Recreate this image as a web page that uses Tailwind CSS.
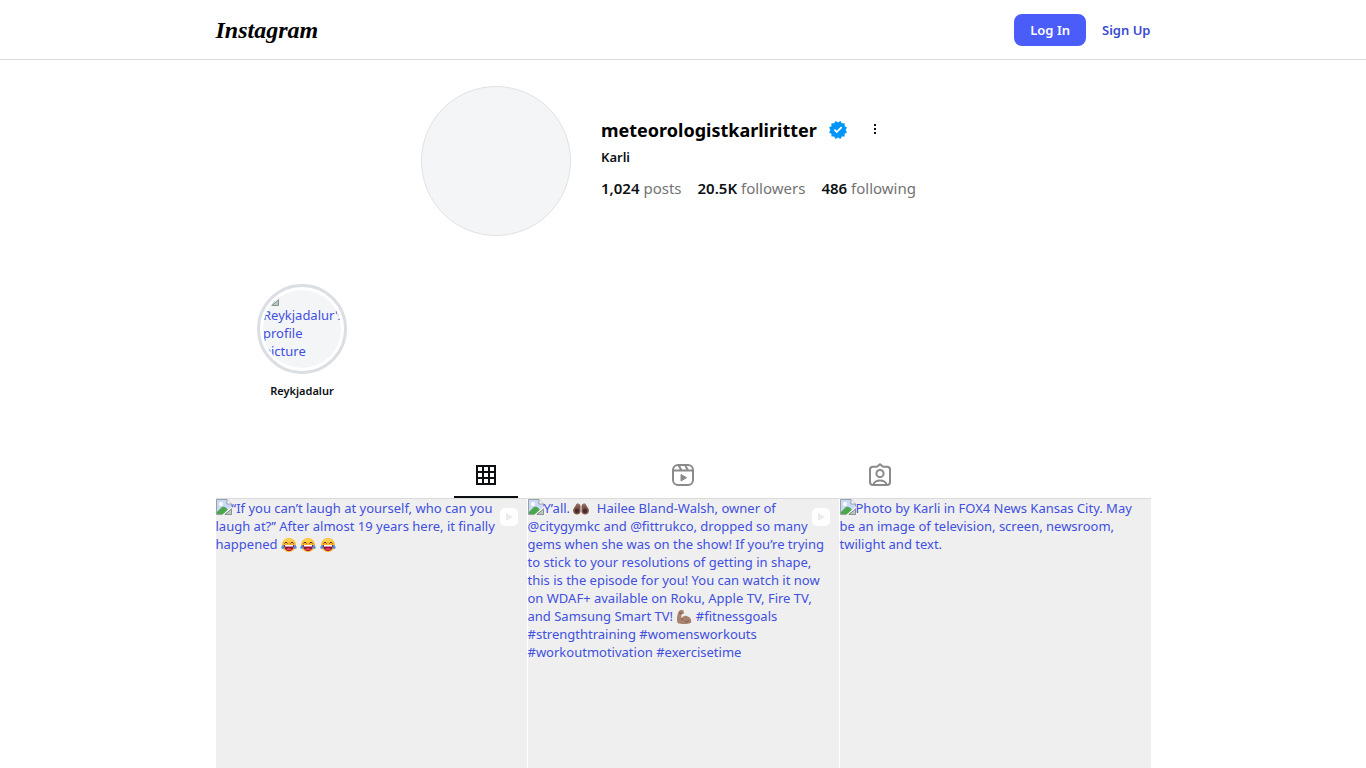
<!DOCTYPE html>
<html lang="en">
<head>
  <meta charset="UTF-8" />
  <meta name="viewport" content="width=device-width, initial-scale=1.0" />
  <title>Karli (@meteorologistkarliritter)</title>
  <script src="https://cdn.jsdelivr.net/npm/@tailwindcss/browser@4"></script>
</head>
<body class="flex h-screen flex-col overflow-hidden bg-white font-['Noto_Sans','Open_Sans',sans-serif] text-[13px] leading-[18px] text-[#0c1014]">

  <!-- shared shapes -->
  <svg class="hidden" aria-hidden="true">
    <symbol id="broken" viewBox="0 0 16 16">
      <path d="M.5 15.500V.5h10.500l4.500 4.500v10.500z" fill="#c9d9f5" stroke="#9aa0a6" />
      <path d="M11 .5V5h4.500" fill="#fff" stroke="#9aa0a6" />
      <circle cx="5" cy="5" r="2" fill="#fff" />
      <path d="M1 15v-2l5-5c2-1 4 0 6 3l2 4z" fill="#4ca64c" />
      <path d="M6 16 16 7v2l-8 7z" fill="#f4f4f4" />
      <path d="M9 15.500h6.500V10z" fill="#b9cbb9" stroke="#8c9196" />
    </symbol>
    <symbol id="joy" viewBox="0 0 16 16">
      <circle cx="8" cy="8" r="7" fill="#fbb52d" />
      <path d="M2 5a7 7 0 0 1 12 0" fill="#ffd04a" />
      <path d="m3.500 6.500 1.500-1.500 1.500 1.500M9.500 6.500 11 5l1.500 1.500" fill="none" stroke="#5b2c3e" />
      <path d="M3 8h10c0 3.500-2 6-5 6S3 11.500 3 8z" fill="#8f163f" />
      <path d="M4 8h8v1.500H4z" fill="#fff" />
      <path d="M5 12.500c2-2 4-2 6 0-1 1-5 1-6 0z" fill="#ef4056" />
      <path d="M3 8c-3 .5-3.500 3.500-1.500 3.800S3.500 10 3 8zM13 8c3 .5 3.500 3.500 1.500 3.800S12.500 10 13 8z" fill="#4a8fe0" />
    </symbol>
    <symbol id="hands" viewBox="0 0 16 16">
      <path d="M7.500 5C6.500 2 3.800 2 3 4L.4 8c-1 3 .8 5.500 3.600 5.500 2.500 0 4-1.500 3.500-4.500z" fill="#7d564c" />
      <path d="M8.500 5C9.500 2 12.200 2 13 4l2.600 4c1 3-.8 5.500-3.600 5.500-2.500 0-4-1.500-3.500-4.500z" fill="#7d564c" />
      <path d="M3.500 4.500 5 3.500l1.500 1M12.500 4.500 11 3.500l-1.500 1" fill="none" stroke="#b08a80" stroke-width=".8" />
      <ellipse cx="4" cy="9.800" rx="2.200" ry="2.400" fill="#4a2b27" />
      <ellipse cx="12" cy="9.800" rx="2.200" ry="2.400" fill="#4a2b27" />
    </symbol>
    <symbol id="arm" viewBox="0 0 16 16">
      <path d="M2.500 3c1-2 3-2.500 5-1.500L8 4.500 5.500 5.500l-.3 4C7 7 9.500 6 12 7.500c2.500 1 3.500 3 3.200 6-3 2-10 2-13.700.5C.5 10.500 1 6 2.500 3z" fill="#a9826f" />
      <path d="M5.200 9.500c1 .5 1.800 1 2 2M3 4l3 .5M9 12.500c1.500.5 3 0 4-1" fill="none" stroke="#77554a" stroke-width=".9" />
    </symbol>
    <symbol id="clip" viewBox="0 0 20 20">
      <rect x="1" y="1" width="18" height="18" rx="5" fill="#fefefe" />
      <path d="M7 6v8l7-4z" fill="#ebebeb" />
    </symbol>
  </svg>

  <header class="shrink-0 border-b border-[#dbdbdb]">
    <div class="mx-auto flex h-[59px] w-full max-w-[935px] items-center justify-between">
      <a href="#" class="font-['Liberation_Serif',serif] text-2xl font-bold text-black italic">Instagram</a>
      <nav class="flex items-center gap-4">
        <button type="button" class="h-8 rounded-lg bg-[#4a5df9] px-4 font-semibold text-white">Log In</button>
        <a href="#" class="font-semibold text-[#3a4bd0]">Sign Up</a>
      </nav>
    </div>
  </header>

  <main class="mx-auto flex min-h-0 w-full max-w-[935px] flex-1 flex-col">
    <section class="mx-auto mt-[26px] flex w-[524px] shrink-0 gap-[30px]">
      <div class="size-[150px] shrink-0 rounded-full border border-[#dfe2e5] bg-[#f3f5f7]"></div>
      <div class="pt-[30px] whitespace-nowrap">
        <div class="flex h-7 items-center">
          <h1 class="text-lg leading-7 font-bold text-black">meteorologistkarliritter</h1>
          <svg class="ml-3 size-[18px]" viewBox="0 0 40 40" role="img" aria-label="Verified">
            <path d="M19.998 3.094 14.638 0l-2.972 5.150H5.432v6.354L0 14.640 3.094 20 0 25.359l5.432 3.137v5.905h5.975L14.638 40l5.360-3.094L25.358 40l3.232-5.600h6.162v-6.010L40 25.359 36.905 20 40 14.641l-5.248-3.030v-6.460h-6.419L25.358 0l-5.360 3.094Z" fill="#0095f6" />
            <path d="m17.200 27.200-6.600-6.600 2.800-2.800 3.800 3.900 9.500-9.500 2.800 2.800z" fill="#fff" />
          </svg>
          <button type="button" aria-label="Options" class="ml-6 text-[#0c1014]">
            <svg class="h-4 w-2" viewBox="0 0 8 16" fill="currentColor">
              <path d="M3 2h2v2H3zM3 6h2v2H3zM3 10h2v2H3z" />
            </svg>
          </button>
        </div>
        <p class="mt-1 font-semibold">Karli</p>
        <ul class="mt-2.5 flex gap-4 text-[15px] leading-6 text-[#737373]">
          <li><span class="font-semibold text-[#0c1014]">1,024</span> posts</li>
          <li><span class="font-semibold text-[#0c1014]">20.5K</span> followers</li>
          <li><span class="font-semibold text-[#0c1014]">486</span> following</li>
        </ul>
      </div>
    </section>

    <section class="mt-12 ml-6 w-[125px] shrink-0 text-center">
      <a href="#" class="mx-auto block size-[90px] rounded-full border-[3px] border-[#dbdfe4] p-[3px] text-left text-[#4150e0]">
        <span class="block size-full overflow-hidden rounded-full bg-[#f3f5f7] whitespace-nowrap">
          <svg class="block size-4" viewBox="0 0 16 16"><use href="#broken" /></svg>
          Reykjadalur's<br />profile<br />picture
        </span>
      </a>
      <p class="mt-2 text-[11px] font-semibold">Reykjadalur</p>
    </section>

    <div class="mt-[52px] shrink-0 border-b border-[#dbdbdb]">
      <div role="tablist" class="mx-auto grid w-[591px] grid-cols-3 justify-items-center">
        <a href="#" role="tab" aria-label="Posts" aria-selected="true" class="flex h-[46px] w-16 items-center justify-center border-b-2 border-[#0c1014] pt-0.5 text-[#0c1014]">
          <svg class="size-6" viewBox="0 0 24 24" fill="none" stroke="currentColor" stroke-width="2">
            <path d="M3 3h18v18H3zM9 3v18M15 3v18M3 9h18M3 15h18" />
          </svg>
        </a>
        <a href="#" role="tab" aria-label="Reels" aria-selected="false" class="flex h-[46px] w-16 items-center justify-center border-b-2 border-transparent pt-0.5 text-[#8a8a8a]">
          <svg class="size-6" viewBox="0 0 24 24" fill="none" stroke="currentColor" stroke-width="2" stroke-linejoin="round">
            <rect x="2" y="2" width="20" height="20" rx="5" />
            <path d="M2 7.500h20M7.500 2l3 5.500M14 2l3 5.500" />
            <path d="m10 11.500 5.500 3.200L10 18z" fill="currentColor" stroke-width="1" />
          </svg>
        </a>
        <a href="#" role="tab" aria-label="Tagged" aria-selected="false" class="flex h-[46px] w-16 items-center justify-center border-b-2 border-transparent pt-0.5 text-[#8a8a8a]">
          <svg class="size-6" viewBox="0 0 24 24" fill="none" stroke="currentColor" stroke-width="2" stroke-linecap="round" stroke-linejoin="round">
            <path d="M9.500 3.300 12 1.200l2.500 2.100a1.500 1.500 0 0 0 1 .4H19a3 3 0 0 1 3 3V19a3 3 0 0 1-3 3H5a3 3 0 0 1-3-3V6.700a3 3 0 0 1 3-3h3.500a1.500 1.500 0 0 0 1-.4z" />
            <path d="M18.600 21.500c-.8-2.300-3.400-4-6.600-4s-5.800 1.700-6.600 4" />
            <circle cx="12" cy="10.500" r="3.600" />
          </svg>
        </a>
      </div>
    </div>

    <section class="grid min-h-0 flex-1 grid-cols-3 gap-px whitespace-nowrap text-[#4150e0]">
      <a href="#" class="relative block bg-[#efefef]">
        <svg class="inline size-4 align-top" viewBox="0 0 16 16"><use href="#broken" /></svg>“If you can’t laugh at yourself, who can you<br />
        laugh at?” After almost 19 years here, it finally<br />
        happened
        <svg class="inline size-4 align-text-bottom" viewBox="0 0 16 16" role="img" aria-label="😂"><use href="#joy" /></svg>
        <svg class="inline size-4 align-text-bottom" viewBox="0 0 16 16" role="img" aria-label="😂"><use href="#joy" /></svg>
        <svg class="inline size-4 align-text-bottom" viewBox="0 0 16 16" role="img" aria-label="😂"><use href="#joy" /></svg>
        <svg class="absolute top-2 right-2 size-5" viewBox="0 0 20 20"><use href="#clip" /></svg>
      </a>
      <a href="#" class="relative block bg-[#efefef]">
        <svg class="inline size-4 align-top" viewBox="0 0 16 16"><use href="#broken" /></svg>Y’all.
        <svg class="mr-1 inline size-4 align-text-bottom" viewBox="0 0 16 16" role="img" aria-label="🙌🏾"><use href="#hands" /></svg>
        Hailee Bland-Walsh, owner of<br />
        @citygymkc and @fittrukco, dropped so many<br />
        gems when she was on the show! If you’re trying<br />
        to stick to your resolutions of getting in shape,<br />
        this is the episode for you! You can watch it now<br />
        on WDAF+ available on Roku, Apple TV, Fire TV,<br />
        and Samsung Smart TV!
        <svg class="inline size-4 align-text-bottom" viewBox="0 0 16 16" role="img" aria-label="💪🏽"><use href="#arm" /></svg>
        #fitnessgoals<br />
        #strengthtraining #womensworkouts<br />
        #workoutmotivation #exercisetime
        <svg class="absolute top-2 right-2 size-5" viewBox="0 0 20 20"><use href="#clip" /></svg>
      </a>
      <a href="#" class="relative block bg-[#efefef]">
        <svg class="inline size-4 align-top" viewBox="0 0 16 16"><use href="#broken" /></svg>Photo by Karli in FOX4 News Kansas City. May<br />
        be an image of television, screen, newsroom,<br />
        twilight and text.
      </a>
    </section>
  </main>
</body>
</html>
